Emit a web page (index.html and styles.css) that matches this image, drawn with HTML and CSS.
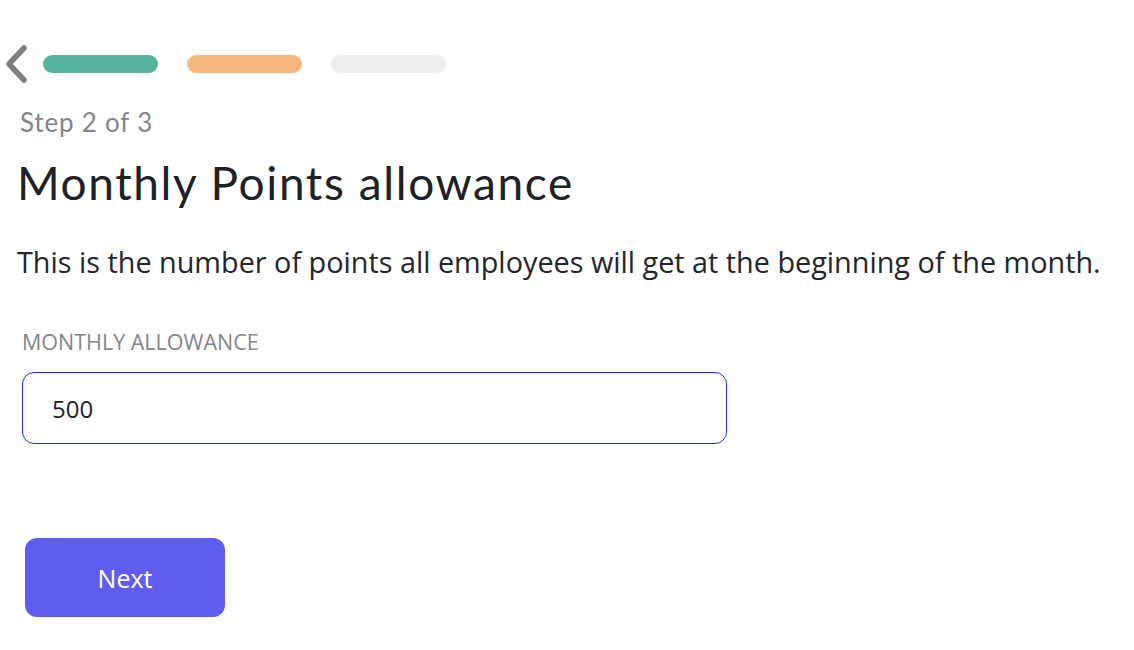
FILE: index.html
```html
<!DOCTYPE html>
<html>
<head>
<meta charset="utf-8">
<link rel="stylesheet" href="styles.css">
</head>
<body>
<main class="page">
  <div class="progress">
    <button class="back" aria-label="Back">
      <svg width="26" height="40" viewBox="0 0 26 40"><path d="M21 4 L6 20 L21 36" fill="none" stroke="#7f8084" stroke-width="5.5" stroke-linecap="round" stroke-linejoin="round"/></svg>
    </button>
    <span class="bar bar-done"></span>
    <span class="bar bar-current"></span>
    <span class="bar bar-todo"></span>
  </div>
  <div class="step">Step 2 of 3</div>
  <h1 class="title">Monthly Points allowance</h1>
  <p class="desc">This is the number of points all employees will get at the beginning of the month.</p>
  <label class="label" for="allow">MONTHLY ALLOWANCE</label>
  <div class="input" id="allow">500</div>
  <button class="next">Next</button>
</main>
</body>
</html>
```
FILE: styles.css
```css
* { box-sizing: border-box; }
html, body { margin: 0; background: #fff; }
body { font-family: "Open Sans", "Liberation Sans", sans-serif; color: #24262b; }
.page { padding: 44px 0 0 0; display: flex; flex-direction: column; align-items: flex-start; }
.progress { display: flex; align-items: center; height: 40px; }
.back { border: 0; background: none; padding: 0; margin-left: 3px; width: 26px; height: 40px; display: flex; }
.bar { width: 115px; height: 18px; border-radius: 9px; margin-right: 29px; }
.progress .bar-done { margin-left: 14px; background: #55b59e; }
.bar-current { background: #f4b87c; }
.bar-todo { background: #eeeeee; }
.step { margin: 22px 0 0 20px; font-family: "Lato", "Liberation Sans", sans-serif; font-size: 26px; color: #848589; letter-spacing: 0.8px; }
.title { margin: 19px 0 0 17px; font-family: "Lato", sans-serif; font-weight: 400; font-size: 46px; line-height: 52px; color: #202125; letter-spacing: 1.6px; }
.desc { margin: 35px 0 0 17px; font-size: 28.8px; line-height: 36px; color: #24262b; }
.label { margin: 48px 0 0 22px; font-size: 21.5px; color: #85868a; letter-spacing: 0; line-height: 28px; }
.input { margin: 16px 0 0 22px; width: 705px; height: 72px; border: 1px solid #1a2cf0; border-radius: 12px; padding: 0 0 0 29px; display: flex; align-items: center; font-size: 24px; color: #202125; }
.next { margin: 94px 0 0 25px; width: 200px; height: 79px; border: 0; border-radius: 12px; background: #5f5ded; color: #fff; font-family: "Open Sans", sans-serif; font-size: 25px; font-weight: 500; }
```
